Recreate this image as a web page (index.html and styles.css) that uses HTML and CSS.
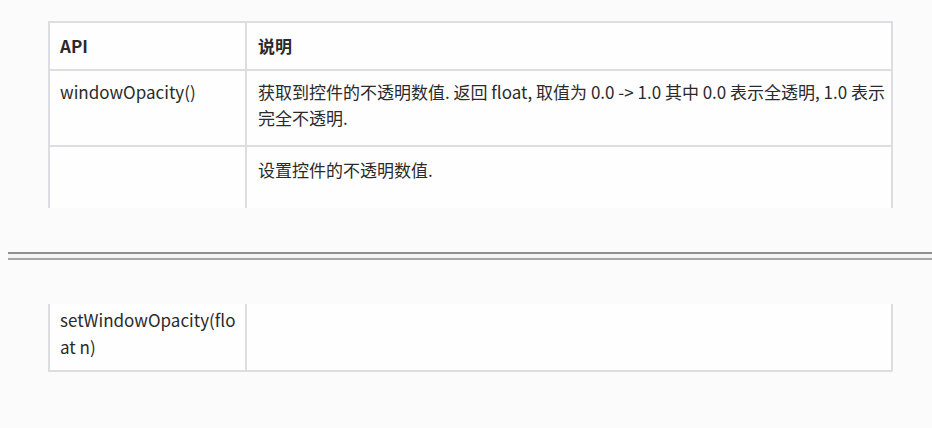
FILE: index.html
```html
<!DOCTYPE html>
<html lang="zh-CN">
<head>
<meta charset="utf-8">
<title>API</title>
<link rel="stylesheet" href="styles.css">
</head>
<body>
<div class="page page-top">
  <div class="frag frag-top">
    <table class="api">
      <colgroup><col class="c1"><col class="c2"></colgroup>
      <tr class="head"><th>API</th><th>说明</th></tr>
      <tr class="r2"><td>windowOpacity()</td><td>获取到控件的不透明数值. 返回 float, 取值为 0.0 -&gt; 1.0 其中 0.0 表示全透明, 1.0 表示完全不透明.</td></tr>
      <tr class="r3"><td></td><td>设置控件的不透明数值.</td></tr>
    </table>
  </div>
</div>
<div class="pagebreak"></div>
<div class="page page-bottom">
  <table class="api cont">
    <colgroup><col class="c1"><col class="c2"></colgroup>
    <tr class="r4"><td class="wrap">setWindowOpacity(float n)</td><td></td></tr>
  </table>
</div>
</body>
</html>
```
FILE: styles.css
```css
html, body {
  margin: 0;
  padding: 0;
  background: #fbfbfb;
}
body {
  font-family: "Noto Sans CJK SC", "Noto Sans", sans-serif;
  font-size: 17px;
  color: #2a2a2a;
  width: 932px;
  height: 428px;
  overflow: hidden;
}
.page-top {
  padding: 21px 0 0 48px;
}
.frag-top {
  width: 845px;
  height: 187px;
  overflow: hidden;
  background: #fefefe;
}
.api {
  width: 845px;
  table-layout: fixed;
  border-collapse: collapse;
  background: #fefefe;
}
.c1 { width: 197px; }
.api th, .api td {
  border: 2px solid #dcdee2;
  text-align: left;
  vertical-align: top;
  padding: 0 4px 0 10px;
  line-height: 26px;
}
.api th {
  font-weight: 700;
  height: 46px;
  vertical-align: middle;
  padding-top: 0;
}
.r2 td {
  padding-top: 8px;
  padding-bottom: 14px;
}
.r2 td + td, .r3 td + td, .head th + th {
  padding-left: 11px;
}
.r3 td {
  padding-top: 10px;
  height: 120px;
}
.pagebreak {
  margin: 44px 0 0 8px;
  height: 4px;
  border-top: 2px solid #8d8f92;
  border-bottom: 2px solid #a3a5a8;
  background: #f4f4f4;
}
.page-bottom {
  padding: 44px 0 0 48px;
}
.cont td {
  border-top: none;
  height: 64px;
  padding-top: 2px;
  line-height: 27px;
}
.wrap {
  word-break: break-all;
}
```
